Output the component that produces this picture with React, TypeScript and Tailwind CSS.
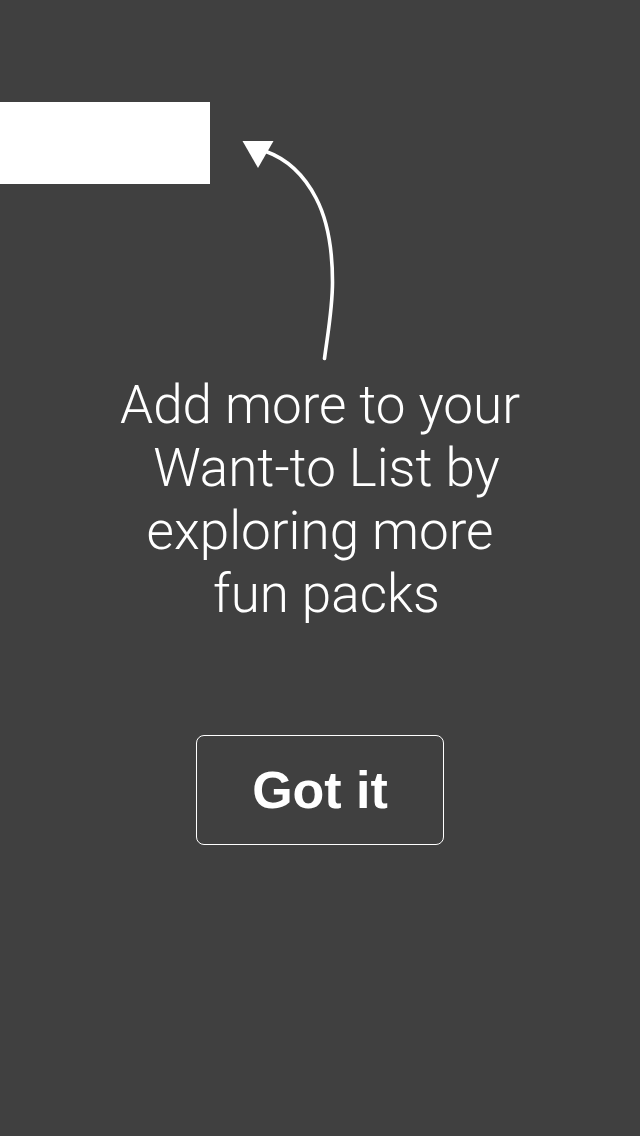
export default function App() {
  return (
    <main className="flex min-h-screen flex-col bg-[#404040] pt-[102px] text-white">
      <div className="flex items-start">
        <div className="h-[82px] w-[210px] bg-white" />
        <svg
          className="mt-[38px] ml-8 h-[222px] w-[94px]"
          viewBox="0 0 94 222"
          fill="none"
          aria-hidden="true"
        >
          <path d="M0.5 1H31.500L16 28Z" fill="white" />
          <path
            d="M24 11.500C45 19 62 35 74 58C85 79 90.500 104 90.500 142C90.500 168 86 192 82.500 218.500"
            stroke="white"
            strokeWidth="3.6"
            strokeLinecap="round"
          />
        </svg>
      </div>
      <p className="mt-3 text-center font-['Roboto','Liberation_Sans',sans-serif] text-[53px] leading-[63px] font-light whitespace-pre">
        {"Add more to your\n Want-to List by\nexploring more\n fun packs"}
      </p>
      <button
        type="button"
        className="mt-[109px] h-[110px] w-[248px] self-center rounded-lg border border-white font-['Liberation_Sans',sans-serif] text-[52px] leading-none font-bold"
      >
        Got it
      </button>
    </main>
  );
}
